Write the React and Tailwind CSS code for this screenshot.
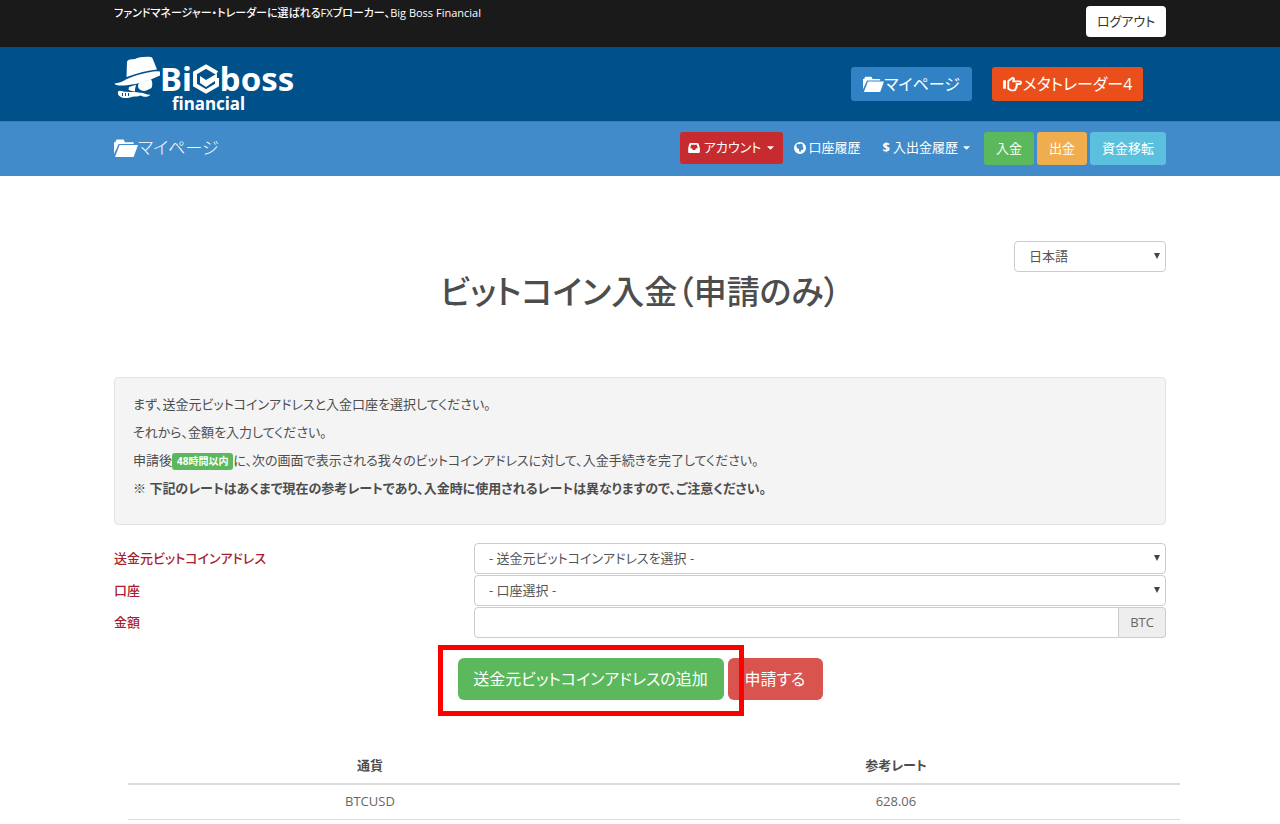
import { useState } from "react";

const FONT = "font-['Open_Sans','Noto_Sans_CJK_JP',sans-serif]";

function FolderIcon({ className }) {
  return (
    <svg viewBox="0 0 24 18" className={className} fill="currentColor" aria-hidden="true">
      <path d="M0 15V3.200h1.200L2.600.600h7L11 3.200h8.600V5H4.600z" />
      <path d="M5.600 6H24l-4.400 12H1z" />
    </svg>
  );
}

function HandIcon({ className }) {
  return (
    <svg viewBox="0 0 20 16" className={className} aria-hidden="true">
      <path d="M0 3.500h3v9H0z" fill="currentColor" />
      <path
        d="M5.500 4.200 9.800 1.200c1.200-.6 2.200.6 1.600 1.700L10.600 4.600h7.200c1.700 0 1.700 2.900 0 2.900h-3.600c1 .6 1 2.100-.2 2.500.6.900.2 1.900-.8 2.200.3 1.300-.4 2-1.500 2H8.200L5.500 12.400z"
        fill="none"
        stroke="currentColor"
        strokeWidth="2"
        strokeLinejoin="round"
      />
    </svg>
  );
}

function InboxIcon({ className }) {
  return (
    <svg viewBox="0 0 14 12" className={className} aria-hidden="true">
      <path
        fill="currentColor"
        fillRule="evenodd"
        d="M3 0h8c.8 0 1.300.4 1.600 1.200L14 6v4.500c0 .9-.6 1.500-1.500 1.500h-11C.6 12 0 11.400 0 10.500V6l1.400-4.800C1.700.4 2.200 0 3 0zM3.500 2.200 2.500 6.200h2L5.600 8.400h2.800l1.100-2.200h2l-1-4z"
      />
    </svg>
  );
}

function GlobeIcon({ className }) {
  return (
    <svg viewBox="0 0 14 14" className={className} aria-hidden="true">
      <path
        fill="currentColor"
        fillRule="evenodd"
        d="M7 0a7 7 0 1 0 0 14A7 7 0 0 0 7 0zM2.600 3.600 4.600 2l1.600.6L8 1.800l2.600 1.400-.8 1.600 1.400 1.800-1.200 2.600-1.800.2L7.400 12 6 10.500 5.800 8.200 3.400 7z"
      />
    </svg>
  );
}

function Caret() {
  return (
    <svg viewBox="0 0 8 4" className="w-[7px] h-1 ml-0.5" fill="currentColor" aria-hidden="true">
      <path d="M0 0h8L4 4z" />
    </svg>
  );
}

function Logo() {
  return (
    <a href="#" aria-label="Bigboss financial" className="flex items-start text-white">
      <svg viewBox="0 0 46 44" className="w-[46px] h-[44px]" fill="currentColor" aria-hidden="true">
        <path d="M13 5.500C14 3.500 17 3.300 21 3c3-1.600 10-2.600 15.500-2 1.500.2 2 1 2.300 2L43 13.500c-9 .8-19 3.500-30.500 7.500z" />
        <path d="M12.300 23.300C22 19 33 15.800 43 15.200l3 .3v4C39 23 26 28 13 29.200 6 30 1 29.500.5 27.500c4-.3 8-1.700 11.800-4.200z" />
        <path d="M15 31l7-2.200c-.5 3-1.500 5-1 7-2-.8-5-.8-6.500-2z" />
        <ellipse cx="30" cy="30" rx="6" ry="5" />
        <path d="M32 25l5-2c1.500 3 1.800 6 .5 9l-3 1.500z" />
        <path d="M4 35.500c1.500-2 5 .3 8 .3 5 .4 10 .2 14 1 3-.6 6 2.200 10.500 2-3 3-7 2.200-10 .7-3 1.500-6 .8-8 1.300-4 1.500-10 2-12 0-2.500-1-3-3.500-2.500-5.300z" />
        <path d="M8.500 37v3M11.500 37v3M14.500 37v3" stroke="#00508a" strokeWidth="1" />
      </svg>
      <span className="flex flex-col pt-0.5 font-['Noto_Sans',sans-serif]">
        <span className="flex items-center h-[42px] text-[33px] leading-[42px] font-bold">
          Bi
          <svg viewBox="0 0 28 30" className="w-7 h-[30px]" fill="none" stroke="currentColor" aria-hidden="true">
            <path d="M25 9 14 2.500 3 9v12l11 6.500L25 21v-7" strokeWidth="4" />
            <path d="m8 12 6 4 11-6.500v6L14 23l-6-4z" fill="currentColor" stroke="none" />
          </svg>
          boss
        </span>
        <span className="pl-3 -mt-1.5 text-[17px] leading-5 font-bold">financial</span>
      </span>
    </a>
  );
}

function SelectBox({ id, label, options, className }) {
  return (
    <div className={`relative ${className}`}>
      <select
        id={id}
        aria-label={label}
        className="appearance-none block w-full h-[31px] pl-[14px] pr-6 bg-white border border-[#ccc] rounded text-[13px] text-[#555]"
      >
        {options.map((option) => <option key={option}>{option}</option>)}
      </select>
      <svg viewBox="0 0 6 6" className="absolute right-[6px] top-3 w-[6px] h-[6px] pointer-events-none" fill="#444" aria-hidden="true">
        <path d="M0 0h6L3 6z" />
      </svg>
    </div>
  );
}

const rates = [{ pair: "BTCUSD", rate: "628.06" }];

function App() {
  const [amount, setAmount] = useState("");

  return (
    <div className={`${FONT} [font-feature-settings:'palt'] text-[13px] text-[#4d4d4d] bg-white`}>
      <div className="bg-[#1a1a1a] h-[47px]">
        <div className="max-w-[1052px] mx-auto flex justify-between items-start text-white">
          <p className="pt-1 text-[11px] leading-[18px] font-medium">ファンドマネージャー・トレーダーに選ばれるFXブローカー、Big Boss Financial</p>
          <button type="button" className="mt-[6px] w-20 h-[31px] rounded bg-white text-[13px] text-[#333]">ログアウト</button>
        </div>
      </div>

      <header className="bg-[#00508a] h-[74px]">
        <div className="max-w-[1052px] mx-auto pt-[9px] flex justify-between items-start">
          <Logo />
          <div className="flex gap-5 mt-[11px] mr-[23px] text-white text-base">
            <a href="#" className="flex items-center justify-center w-[121px] h-[34px] rounded-[3px] bg-[#3082c5]">
              <FolderIcon className="w-[21px] h-4" />
              マイページ
            </a>
            <a href="#" className="flex items-center justify-center gap-px w-[151px] h-[34px] rounded-[3px] bg-[#ea4f1b]">
              <HandIcon className="w-[19px] h-[15px]" />
              メタトレーダー4
            </a>
          </div>
        </div>
      </header>

      <nav className="bg-[#428bca] h-[55px] border-t border-[#3a7fbd]">
        <div className="max-w-[1052px] mx-auto flex justify-between items-start text-white">
          <a href="#" className="flex items-center pt-3 text-[17px] leading-[28px] font-light">
            <FolderIcon className="w-6 h-[18px]" />
            マイページ
          </a>
          <div className="flex items-start pt-[10px]">
            <button type="button" className="flex items-center justify-center gap-1 w-[103px] h-[32px] rounded-[3px] bg-[#c52b2f]">
              <InboxIcon className="w-3 h-[10px]" />
              アカウント
              <Caret />
            </button>
            <a href="#" className="flex items-center gap-[3px] h-[32px] ml-[11px]">
              <GlobeIcon className="w-3 h-3" />
              口座履歴
            </a>
            <button type="button" className="flex items-center gap-[3px] h-[32px] ml-[22px]">
              <span className="font-bold">$</span>
              入出金履歴
              <Caret />
            </button>
            <div className="flex gap-[3px] ml-[14px]">
              <button type="button" className="w-[50px] h-[33px] rounded-[3px] bg-[#5cb85c]">入金</button>
              <button type="button" className="w-[50px] h-[33px] rounded-[3px] bg-[#f0ad4e]">出金</button>
              <button type="button" className="w-[76px] h-[33px] rounded-[3px] bg-[#5bc0de]">資金移転</button>
            </div>
          </div>
        </div>
      </nav>

      <main className="max-w-[1052px] mx-auto pt-[65px]">
        <div className="flex justify-end">
          <SelectBox id="language" label="言語" options={["日本語"]} className="w-[152px]" />
        </div>
        <h1 className="text-center text-[33px] leading-10 font-medium">ビットコイン入金（申請のみ）</h1>

        <div className="mt-[65px] px-[18px] pt-3 pb-[22px] border border-[#e3e3e3] rounded bg-[#f4f4f4] leading-7">
          <p>まず、送金元ビットコインアドレスと入金口座を選択してください。</p>
          <p>それから、金額を入力してください。</p>
          <p>
            申請後
            <span className="inline-block px-[5px] rounded-[3px] bg-[#5cb85c] text-[10px] leading-[17px] font-bold text-white">48時間以内</span>
            に、次の画面で表示される我々のビットコインアドレスに対して、入金手続きを完了してください。
          </p>
          <p className="font-bold">※ 下記のレートはあくまで現在の参考レートであり、入金時に使用されるレートは異なりますので、ご注意ください。</p>
        </div>

        <form className="mt-[18px]" onSubmit={(e) => e.preventDefault()}>
          <div className="grid grid-cols-[360px_1fr] gap-y-px items-center">
            <label htmlFor="address" className="font-medium text-[#a8202e]">送金元ビットコインアドレス</label>
            <SelectBox id="address" options={["- 送金元ビットコインアドレスを選択 -"]} className="w-full" />
            <label htmlFor="account" className="font-medium text-[#a8202e]">口座</label>
            <SelectBox id="account" options={["- 口座選択 -"]} className="w-full" />
            <label htmlFor="amount" className="font-medium text-[#a8202e]">金額</label>
            <div className="flex h-[31px]">
              <input
                id="amount"
                type="text"
                value={amount}
                onChange={(e) => setAmount(e.target.value)}
                className="flex-1 min-w-0 px-[14px] bg-white border border-[#ccc] rounded-l"
              />
              <span className="flex items-center justify-center w-[47px] border border-l-0 border-[#ccc] rounded-r bg-[#eee] text-[#666]">BTC</span>
            </div>
          </div>

          <div className="flex justify-center gap-1 mt-5 text-white text-base">
            <div className="relative">
              <button type="button" className="w-[266px] h-[42px] rounded-md bg-[#5cb85c]">送金元ビットコインアドレスの追加</button>
              <span className="absolute -left-5 -right-5 -top-[13px] -bottom-4 z-10 border-[5px] border-[#f00] pointer-events-none" />
            </div>
            <button type="submit" className="w-[95px] h-[42px] rounded-md bg-[#d9534f]">申請する</button>
          </div>
        </form>

        <table className="ml-[14px] w-full mt-12 table-fixed text-center">
          <thead>
            <tr className="h-9 border-b-2 border-[#ddd]">
              <th className="w-[46%] font-bold">通貨</th>
              <th className="font-bold">参考レート</th>
            </tr>
          </thead>
          <tbody>
            {rates.map((row) => (
              <tr key={row.pair} className="h-[35px] border-b border-[#ddd] text-[#666]">
                <td>{row.pair}</td>
                <td>{row.rate}</td>
              </tr>
            ))}
          </tbody>
        </table>
      </main>
    </div>
  );
}

export default App;
